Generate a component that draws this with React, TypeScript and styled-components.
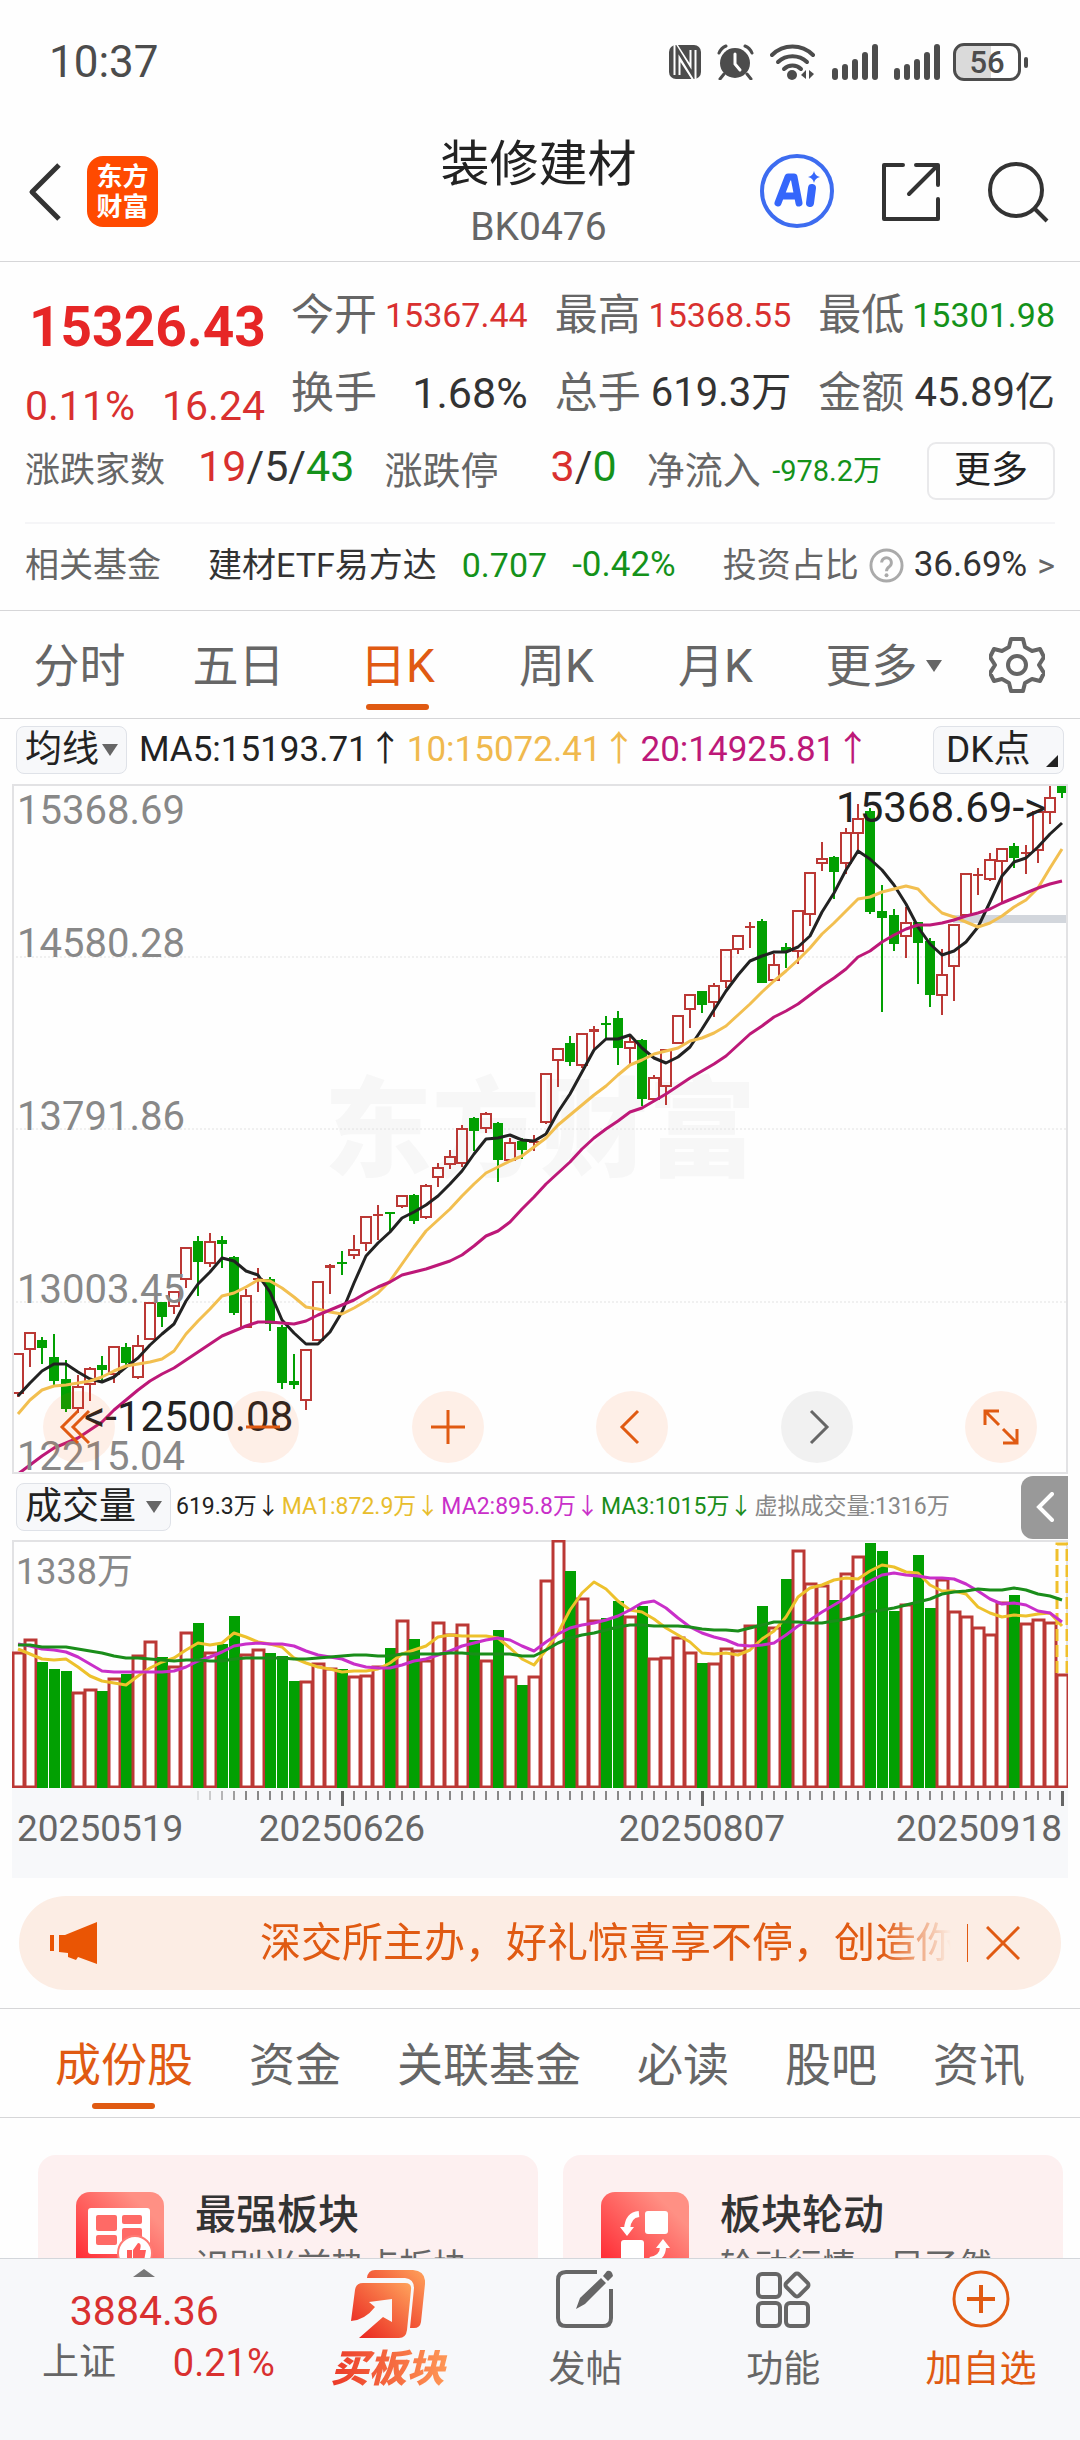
import React from 'react';
import styled, { createGlobalStyle, css } from 'styled-components';

const color = {
  ink: '#222222',
  text: '#333333',
  muted: '#666666',
  faint: '#888888',
  up: '#d9302f',
  down: '#14921a',
  accent: '#e05a12',
  line: '#d6d6d8',
  frame: '#e2e2e4',
  panel: '#f7f8fa',
};

const Global = createGlobalStyle`
  *, *::before, *::after { box-sizing: border-box; }
  body {
    margin: 0;
    background: #fefefe;
    color: ${color.text};
    font-family: Roboto, 'Noto Sans CJK SC', sans-serif;
  }
  button {
    margin: 0;
    padding: 0;
    border: 0;
    background: none;
    color: inherit;
    font: inherit;
    cursor: pointer;
  }
  a { color: inherit; text-decoration: none; }
  svg { display: block; flex: none; }
`;

const Screen = styled.div`
  display: flex;
  flex-direction: column;
  height: 100vh;
  overflow: hidden;
`;

const Scroll = styled.main`
  flex: 1;
  min-height: 0;
  overflow-y: auto;
  scrollbar-width: none;
`;

/* ---------- status bar ---------- */

const StatusBar = styled.div`
  display: flex;
  align-items: center;
  justify-content: space-between;
  height: 124px;
  padding: 0 51px 0 49px;
  color: #4c4c4c;
  font-size: 44px;
  line-height: 60px;
`;

const StatusIcons = styled.div`
  display: flex;
  align-items: center;
  gap: 16px;
`;

/* ---------- header ---------- */

const Header = styled.header`
  display: grid;
  grid-template-columns: 1fr auto 1fr;
  align-items: center;
  height: 138px;
  padding: 0 31px 2px 28px;
  border-bottom: 1px solid ${color.line};
`;

const HeaderSide = styled.div<{ $end?: boolean }>`
  display: flex;
  align-items: center;
  gap: ${(p) => (p.$end ? 46 : 26)}px;
  justify-content: ${(p) => (p.$end ? 'flex-end' : 'flex-start')};
`;

const Logo = styled.div`
  display: grid;
  place-content: center;
  width: 71px;
  height: 71px;
  border-radius: 16px;
  background: #ff4a00;
  color: #fff;
  font-size: 26px;
  font-weight: 700;
  line-height: 30px;
`;

const TitleBlock = styled.div`
  padding-top: 6px;
  text-align: center;
`;

const Title = styled.h1`
  margin: 0;
  color: ${color.ink};
  font-size: 49px;
  font-weight: 400;
  line-height: 64px;
`;

const Code = styled.div`
  color: ${color.muted};
  font-size: 39px;
  line-height: 60px;
`;

/* ---------- quote panel ---------- */

const Quote = styled.section`
  padding: 14px 25px 0;
  border-bottom: 1px solid ${color.line};
  line-height: 50px;
`;

const QuoteTop = styled.div`
  display: grid;
  grid-template-columns: 240px 1fr;
  gap: 26px;
`;

const Price = styled.div`
  padding-top: 18px;
  color: ${color.up};
`;

const PriceNow = styled.div`
  padding-left: 4px;
  color: #e62626;
  font-size: 55px;
  font-weight: 700;
  line-height: 66px;
`;

const PriceChange = styled.div`
  display: flex;
  justify-content: space-between;
  margin-top: 20px;
  font-size: 41px;
  line-height: 52px;
`;

const Metrics = styled.div`
  display: grid;
  grid-template-columns: repeat(3, 1fr);
  column-gap: 27px;
`;

const Metric = styled.div`
  display: flex;
  align-items: center;
  justify-content: space-between;
  height: 78px;
  white-space: nowrap;
`;

const MetricLabel = styled.span<{ $size?: number }>`
  color: ${color.muted};
  font-size: ${(p) => p.$size ?? 43}px;
`;

const Value = styled.span<{ $tone?: string; $size?: number }>`
  color: ${(p) => p.$tone ?? color.text};
  font-size: ${(p) => p.$size ?? 43}px;
`;

const BreadthRow = styled.div`
  display: flex;
  align-items: center;
  gap: 30px;
  height: 78px;
`;

const Breadth = styled(Metric)<{ $grow: number }>`
  flex: ${(p) => p.$grow} 1 0;
`;

const MoreButton = styled.button`
  width: 128px;
  height: 58px;
  margin-left: 15px;
  border: 2px solid #e9e9eb;
  border-radius: 9px;
  color: ${color.ink};
  font-size: 37px;
  line-height: 50px;
`;

const FundRow = styled.a`
  display: flex;
  align-items: center;
  height: 88px;
  margin-top: 12px;
  padding-bottom: 4px;
  border-top: 2px solid #f5f5f7;
  font-size: 34px;
  white-space: nowrap;
`;

const FundMain = styled.span`
  display: flex;
  gap: 25px;
  margin-left: 47px;
`;

const FundShare = styled.span`
  display: flex;
  align-items: center;
  gap: 10px;
  margin-left: auto;
`;

/* ---------- tabs ---------- */

const PeriodTabs = styled.nav`
  display: grid;
  grid-template-columns: repeat(5, 159fr) 177fr 108fr;
  height: 108px;
  border-bottom: 1px solid ${color.line};
`;

const activeBar = css`
  &::after {
    content: '';
    position: absolute;
    bottom: 8px;
    left: 50%;
    width: 63px;
    height: 6px;
    margin-left: -32px;
    border-radius: 3px;
    background: ${color.accent};
  }
`;

const Tab = styled.button<{ $active?: boolean }>`
  position: relative;
  display: flex;
  align-items: center;
  justify-content: center;
  gap: 8px;
  padding-top: 3px;
  color: ${(p) => (p.$active ? color.accent : color.muted)};
  font-size: 46px;
  line-height: 60px;
  ${(p) => p.$active && activeBar}
`;

const GearButton = styled.button`
  display: grid;
  place-items: center;
  padding-right: 18px;
`;

const SectionTabs = styled.nav`
  display: flex;
  justify-content: space-between;
  height: 110px;
  padding: 0 55px;
  border-top: 1px solid ${color.line};
  border-bottom: 1px solid ${color.line};
`;

/* ---------- chart ---------- */

const IndicatorRow = styled.div`
  display: flex;
  align-items: center;
  height: 65px;
  padding: 0 16px 4px;
`;

const PillButton = styled.button<{ $width: number }>`
  position: relative;
  display: flex;
  flex: none;
  align-items: center;
  justify-content: space-between;
  width: ${(p) => p.$width}px;
  height: 48px;
  padding: 0 8px;
  border: 1px solid #dfe2e8;
  border-radius: 8px;
  background: ${color.panel};
  color: ${color.ink};
  font-size: 37px;
  line-height: 46px;
`;

const CornerPill = styled(PillButton)`
  padding: 0 12px;
`;

const Reading = styled.span<{ $tone: string }>`
  color: ${(p) => p.$tone};
`;

const Readings = styled.div`
  display: flex;
  flex: 1;
  gap: 4px;
  margin-left: 12px;
  font-size: 35px;
  line-height: 46px;
  white-space: nowrap;
`;

const VolumeRow = styled.div`
  display: flex;
  align-items: center;
  height: 66px;
  padding: 0 12px 0 16px;
`;

const VolumeReadings = styled.div`
  display: flex;
  flex: 1;
  gap: 2px;
  margin-left: 5px;
  font-size: 23px;
  line-height: 46px;
  white-space: nowrap;
`;

const CollapseButton = styled.button`
  display: grid;
  place-items: center;
  width: 47px;
  height: 63px;
  border-radius: 12px 0 0 12px;
  background: #999;
`;

const ChartBox = styled.div`
  position: relative;
  margin: 0 12px;
`;

const ChartSvg = styled.svg`
  width: 100%;
  height: auto;
`;

const AxisSvg = styled(ChartSvg)`
  background: ${color.panel};
`;

const ChartTools = styled.div`
  position: absolute;
  right: 31px;
  bottom: 11px;
  left: 31px;
  display: flex;
  justify-content: space-between;
`;

const ToolButton = styled.button<{ $disabled?: boolean }>`
  display: grid;
  place-items: center;
  width: 72px;
  height: 72px;
  border-radius: 50%;
  background: ${(p) => (p.$disabled ? 'rgba(0, 0, 0, 0.05)' : 'rgba(255, 90, 0, 0.09)')};
  color: ${(p) => (p.$disabled ? '#666' : color.accent)};
`;

/* ---------- notice ---------- */

const Notice = styled.aside`
  display: flex;
  align-items: center;
  height: 94px;
  margin: 18px 19px;
  padding: 0 41px 0 31px;
  border-radius: 47px;
  background: #fcede4;
  color: ${color.accent};
`;

const NoticeText = styled.a`
  flex: 1;
  min-width: 0;
  margin: 0 16px 0 162px;
  overflow: hidden;
  font-size: 41px;
  line-height: 56px;
  white-space: nowrap;
  mask-image: linear-gradient(to right, #000 90%, transparent 100%);
`;

const NoticeClose = styled.button`
  display: flex;
  align-items: center;
  gap: 18px;
`;

const NoticeRule = styled.span`
  width: 1px;
  height: 38px;
  background: ${color.accent};
`;

/* ---------- cards ---------- */

const Cards = styled.section`
  display: grid;
  grid-template-columns: 1fr 1fr;
  gap: 25px;
  padding: 37px 17px 0 38px;
`;

const Card = styled.a`
  display: flex;
  gap: 31px;
  padding: 37px 38px;
  border-radius: 18px;
  background: #fdf0f0;
`;

const CardTitle = styled.h2`
  margin: -6px 0 0;
  color: ${color.text};
  font-size: 41px;
  font-weight: 500;
  line-height: 58px;
`;

const CardNote = styled.p`
  margin: 0;
  color: ${color.muted};
  font-size: 34px;
  line-height: 44px;
  white-space: nowrap;
`;

/* ---------- bottom bar ---------- */

const BottomBar = styled.nav`
  display: grid;
  grid-template-columns: 289fr repeat(4, 198fr);
  flex: none;
  height: 182px;
  border-top: 1px solid #d3d6db;
  background: ${color.panel};
`;

const IndexButton = styled.button`
  display: flex;
  flex-direction: column;
  align-items: center;
  padding-top: 10px;
  color: ${color.up};
  text-align: left;
`;

const IndexValue = styled.span`
  margin-top: 8px;
  font-size: 41px;
  line-height: 52px;
`;

const IndexLine = styled.span`
  display: flex;
  align-items: center;
  justify-content: space-between;
  width: 100%;
  padding: 0 14px 0 42px;
  font-size: 38px;
  line-height: 52px;
`;

const BarItem = styled.button<{ $accent?: boolean }>`
  display: flex;
  flex-direction: column;
  align-items: center;
  padding-top: 11px;
  color: ${(p) => (p.$accent ? color.accent : color.muted)};
`;

const BarLabel = styled.span`
  margin-top: 16px;
  font-size: 37px;
  line-height: 52px;
`;

const HotLabel = styled.span`
  margin-top: 5px;
  padding: 0 6px;
  background: linear-gradient(90deg, #ea3426, #ff9a57);
  background-clip: text;
  color: transparent;
  font-size: 38px;
  font-style: italic;
  font-weight: 900;
  line-height: 52px;
`;

/* ---------- icons ---------- */

const NfcIcon = () => (
  <svg width="32" height="34" viewBox="0 0 32 34" aria-hidden="true">
    <rect width="32" height="34" rx="7" fill="#4c4c4c" />
    <path d="M8 30V5l16 25V5" fill="none" stroke="#fff" strokeWidth="7" />
    <path d="M8 31V4l16 26V4" fill="none" stroke="#4c4c4c" strokeWidth="3" />
  </svg>
);

const AlarmIcon = () => (
  <svg width="37" height="36" viewBox="0 0 37 36" aria-hidden="true">
    <circle cx="18" cy="19" r="15" fill="#4c4c4c" />
    <path d="M2 9a13 13 0 0 1 7-7M35 9a13 13 0 0 0-7-7M7 30l-4 5M30 30l4 5" fill="none" stroke="#4c4c4c" strokeWidth="3" strokeLinecap="round" />
    <path d="M18 10v10l5 6" fill="none" stroke="#fff" strokeWidth="3" strokeLinecap="round" />
  </svg>
);

const WifiIcon = () => (
  <svg width="46" height="36" viewBox="0 0 46 36" aria-hidden="true">
    <g fill="none" stroke="#4c4c4c" strokeWidth="4" strokeLinecap="round">
      <path d="M2 11a29 29 0 0 1 41 0" />
      <path d="M8 18a21 21 0 0 1 29 0" />
      <path d="M14 25a12 12 0 0 1 17 0" />
    </g>
    <circle cx="22" cy="31" r="5" fill="#4c4c4c" />
    <path d="M36 26v9l-5-4zM39 26v9l5-5z" fill="#4c4c4c" />
  </svg>
);

const SignalIcon = () => (
  <svg width="46" height="36" viewBox="0 0 46 36" aria-hidden="true">
    <path d="M3 27v6M13 23v10M23 18v15M33 11v22M43 3v30" stroke="#4c4c4c" strokeWidth="6" strokeLinecap="round" />
  </svg>
);

const Battery = styled.span`
  position: relative;
  width: 68px;
  height: 38px;
  margin-right: 8px;
  margin-left: -3px;
  border: 3px solid #4c4c4c;
  border-radius: 11px;
  background: linear-gradient(90deg, #dadada 56%, #fff 56%);
  font-size: 31px;
  font-weight: 500;
  line-height: 33px;
  text-align: center;

  &::after {
    content: '';
    position: absolute;
    top: 11px;
    right: -10px;
    width: 4px;
    height: 11px;
    border-radius: 2px;
    background: #4c4c4c;
  }
`;

const BackIcon = () => (
  <svg width="33" height="58" viewBox="0 0 33 58" aria-hidden="true">
    <path d="M31 2L4 29l27 27" fill="none" stroke="#333" strokeWidth="5" strokeLinejoin="round" />
  </svg>
);

const AiIcon = () => (
  <svg width="75" height="75" viewBox="0 0 75 75" aria-hidden="true">
    <circle cx="37" cy="37" r="35" fill="none" stroke="#3d6cf0" strokeWidth="4" />
    <path d="M18 49l10-26h6l5 26M23 42h14" fill="none" stroke="#3566fb" strokeWidth="7" strokeLinejoin="round" strokeLinecap="round" />
    <path d="M52 34l-2 15" fill="none" stroke="#3566fb" strokeWidth="8" strokeLinecap="round" />
    <path d="M54 17q1 5 6 6q-5 1-6 6q-1-5-6-6q5-1 6-6z" fill="#3566fb" />
  </svg>
);

const ShareIcon = () => (
  <svg width="60" height="60" viewBox="0 0 60 60" aria-hidden="true">
    <path d="M22 3H3v54h54V37M35 3h22v20M56 4L28 32" fill="none" stroke="#333" strokeWidth="4" strokeLinejoin="round" strokeLinecap="round" />
  </svg>
);

const SearchIcon = () => (
  <svg width="62" height="62" viewBox="0 0 62 62" aria-hidden="true">
    <circle cx="29" cy="29" r="26" fill="none" stroke="#333" strokeWidth="4" />
    <path d="M48 48l12 12" stroke="#333" strokeWidth="4" />
  </svg>
);

const HelpIcon = () => (
  <svg width="35" height="35" viewBox="0 0 36 36" aria-hidden="true">
    <circle cx="18" cy="18" r="16" fill="none" stroke="#aaa" strokeWidth="3" />
    <path d="M13 15a5 5 0 1 1 8 4q-3 2-3 5" fill="none" stroke="#aaa" strokeWidth="3" />
    <circle cx="18" cy="28" r="2" fill="#aaa" />
  </svg>
);

const GearIcon = () => (
  <svg width="56" height="56" viewBox="0 0 56 56" aria-hidden="true">
    <path
      d="M22 2h12l2 8 7 4 8-2 4 8-5 8 5 8-4 8-8-2-7 4-2 8H22l-2-8-7-4-8 2-4-8 5-8-5-8 4-8 8 2 7-4z"
      fill="none"
      stroke="#666"
      strokeWidth="4"
      strokeLinejoin="round"
    />
    <circle cx="28" cy="28" r="9" fill="none" stroke="#666" strokeWidth="4" />
  </svg>
);

const CaretIcon = () => (
  <svg width="16" height="14" viewBox="0 0 16 14" aria-hidden="true">
    <path d="M0 1h16L8 13z" fill="#666" />
  </svg>
);

const CornerMark = styled.span`
  position: absolute;
  right: 5px;
  bottom: 6px;
  border-bottom: 12px solid ${color.ink};
  border-left: 12px solid transparent;
`;

const ToolIcon = ({ d, width = 3 }: { d: string; width?: number }) => (
  <svg width="40" height="40" viewBox="0 0 40 40" fill="none" stroke="currentColor" strokeWidth={width} aria-hidden="true">
    <path d={d} />
  </svg>
);

const HornIcon = () => (
  <svg width="48" height="42" viewBox="0 0 48 42" fill="#ea5504" aria-hidden="true">
    <path d="M0 13h4v16H0zM9 13h6L47 0v42l-19-7-2 3-8-3 0-4-9-1z" />
  </svg>
);

const CloseIcon = () => (
  <svg width="34" height="34" viewBox="0 0 34 34" aria-hidden="true">
    <path d="M1 1l32 32M33 1L1 33" stroke={color.accent} strokeWidth="3" />
  </svg>
);

const CardGradient = ({ id }: { id: string }) => (
  <linearGradient id={id} x1="0" y1="1" x2="1" y2="0">
    <stop offset="15%" stopColor="#ff3038" />
    <stop offset="80%" stopColor="#ff9084" />
  </linearGradient>
);

const BoardIcon = () => (
  <svg width="88" height="88" viewBox="0 0 88 88" aria-hidden="true">
    <defs><CardGradient id="board" /></defs>
    <rect width="88" height="88" rx="14" fill="url(#board)" />
    <rect x="12" y="16" width="62" height="46" rx="3" fill="#fff" />
    <g fill="#ff6a66">
      <rect x="20" y="23" width="21" height="16" rx="2" />
      <rect x="46" y="23" width="20" height="9" rx="2" />
      <rect x="20" y="43" width="21" height="10" rx="2" />
      <rect x="46" y="36" width="20" height="18" rx="2" />
    </g>
    <circle cx="59" cy="61" r="17" fill="#fff" stroke="#ff7a73" strokeWidth="2" />
    <path d="M51 58h5v11h-5zM57 58l5-7q4 0 2 7h6l-2 11H57z" fill="#ff5c5a" />
    <rect x="24" y="67" width="18" height="6" rx="3" fill="#fff" />
  </svg>
);

const RotateIcon = () => (
  <svg width="88" height="88" viewBox="0 0 88 88" aria-hidden="true">
    <defs><CardGradient id="rotate" /></defs>
    <rect width="88" height="88" rx="14" fill="url(#rotate)" />
    <rect x="44" y="19" width="23" height="23" rx="3" fill="#fff" />
    <rect x="20" y="48" width="23" height="23" rx="3" fill="#fff" />
    <path d="M38 22q-11 1-12 15M49 68q13-2 13-13" fill="none" stroke="#fff" strokeWidth="6" />
    <path d="M19 35h14l-7 9zM55 56h14l-7-9z" fill="#fff" />
  </svg>
);

const HotIcon = () => (
  <svg width="74" height="68" viewBox="0 0 74 68" aria-hidden="true">
    <defs>
      <linearGradient id="hot" x1="0" y1="1" x2="1" y2="0">
        <stop offset="10%" stopColor="#ea2a22" />
        <stop offset="100%" stopColor="#ffa35c" />
      </linearGradient>
    </defs>
    <path d="M16 8q1-8 8-8h38q13 1 12 14l-4 38q-1 6-7 6h-4l4-40q0-9-9-10z" fill="url(#hot)" />
    <path d="M0 51L4 20q1-7 8-7h42q7 0 6 7l-4 40q-1 8-8 8H8l24-21 9 5V29l-23 3 6 5Q14 50 0 51z" fill="url(#hot)" />
  </svg>
);

const PostIcon = () => (
  <svg width="58" height="58" viewBox="0 0 58 58" aria-hidden="true">
    <path d="M41 2H10q-8 0-8 8v38q0 8 8 8h37q8 0 8-8V19" fill="none" stroke="#666" strokeWidth="4" />
    <path d="M20 39l4-11 21-20 5 5-21 21zM47 6l4-5q5-1 6 5l-5 5z" fill="#666" />
  </svg>
);

const GridIcon = () => (
  <svg width="58" height="58" viewBox="0 0 58 58" fill="none" stroke="#666" strokeWidth="4" aria-hidden="true">
    <rect x="4" y="4" width="22" height="23" rx="4" />
    <rect x="4" y="33" width="22" height="23" rx="4" />
    <rect x="32" y="33" width="22" height="23" rx="4" />
    <rect x="34" y="6" width="18" height="18" rx="3" transform="rotate(45 43 15)" />
  </svg>
);

const AddIcon = () => (
  <svg width="58" height="58" viewBox="0 0 58 58" fill="none" stroke={color.accent} strokeWidth="3" aria-hidden="true">
    <circle cx="29" cy="29" r="27" />
    <path d="M29 15v28M15 29h28" strokeWidth="4" />
  </svg>
);

/* ---------- chart data ---------- */

const STEP = 12;
const PRICE_H = 690;
const VOLUME_H = 248;

// One candle per trading day: direction, body top, body bottom, wick top, wick bottom.
type Candle = [0 | 1, number, number, number, number];
const candles: Candle[] = [
  [1, 569, 609, 569, 613], [1, 548, 565, 548, 583], [0, 556, 564, 553, 580], [0, 573, 597, 550, 601],
  [0, 595, 625, 576, 628], [1, 602, 624, 591, 629], [1, 584, 600, 583, 617], [0, 581, 586, 572, 598],
  [1, 562, 590, 562, 599], [0, 563, 579, 559, 581], [1, 561, 593, 551, 595], [1, 518, 555, 518, 555],
  [0, 518, 533, 518, 543], [1, 507, 522, 507, 530], [1, 463, 495, 463, 504], [0, 457, 478, 452, 512],
  [1, 457, 479, 449, 483], [0, 456, 460, 452, 484], [0, 473, 529, 472, 531], [1, 511, 543, 505, 543],
  [1, 494, 496, 484, 508], [0, 495, 540, 493, 547], [0, 543, 599, 541, 605], [0, 597, 601, 570, 605],
  [1, 565, 616, 565, 626], [1, 497, 556, 497, 556], [1, 481, 484, 480, 510], [0, 478, 480, 467, 491],
  [1, 465, 471, 451, 475], [1, 432, 459, 432, 467], [1, 430, 432, 421, 456], [0, 428, 430, 428, 448],
  [1, 411, 422, 411, 424], [0, 411, 437, 410, 440], [1, 401, 433, 400, 435], [1, 383, 393, 379, 403],
  [1, 372, 380, 366, 385], [1, 344, 379, 341, 383], [0, 334, 347, 333, 367], [1, 329, 344, 328, 349],
  [0, 339, 376, 338, 398], [1, 358, 376, 354, 376], [0, 357, 366, 354, 375], [1, 357, 359, 351, 367],
  [1, 289, 338, 289, 340], [1, 264, 276, 264, 303], [0, 259, 278, 252, 282], [1, 249, 281, 249, 284],
  [1, 245, 248, 242, 266], [0, 239, 241, 232, 255], [0, 234, 264, 227, 281], [1, 257, 264, 253, 281],
  [0, 256, 315, 255, 322], [1, 293, 315, 291, 317], [1, 265, 302, 265, 321], [1, 231, 259, 231, 259],
  [1, 210, 225, 210, 244], [0, 207, 221, 207, 229], [1, 201, 218, 199, 233], [1, 165, 197, 165, 204],
  [1, 151, 165, 151, 170], [1, 142, 144, 138, 164], [0, 137, 199, 135, 199], [1, 180, 196, 170, 196],
  [0, 163, 168, 159, 184], [1, 126, 167, 126, 180], [1, 88, 130, 88, 142], [1, 74, 79, 58, 87],
  [0, 73, 88, 72, 115], [1, 48, 79, 44, 90], [1, 34, 49, 20, 68], [0, 27, 128, 24, 130],
  [0, 127, 134, 101, 228], [0, 131, 160, 125, 167], [1, 138, 152, 123, 174], [0, 138, 159, 138, 200],
  [0, 157, 211, 154, 223], [1, 190, 211, 165, 231], [1, 140, 182, 140, 217], [1, 89, 131, 89, 131],
  [1, 90, 92, 84, 111], [1, 75, 95, 69, 97], [1, 64, 77, 64, 118], [0, 62, 74, 59, 84],
  [1, 68, 70, 61, 90], [1, 27, 66, 27, 79], [1, 13, 28, 0, 40], [0, 0, 9, 0, 14],
];

const ma5 = [
  612, 599, 587, 580, 580, 588, 595, 598, 593, 583, 574, 561, 550, 540, 517, 500, 488, 474, 477, 487, 491, 508,
  536, 549, 560, 560, 548, 528, 499, 472, 459, 448, 434, 428, 421, 412, 400, 387, 370, 355, 354, 351, 356, 357,
  350, 328, 310, 288, 266, 255, 255, 251, 264, 274, 279, 273, 263, 245, 226, 207, 191, 177, 172, 168, 168, 163,
  152, 128, 109, 86, 67, 75, 86, 101, 120, 143, 160, 171, 167, 158, 143, 118, 92, 78, 74, 63, 50, 39,
];
const ma10 = [
  630, 616, 606, 602, 601, 599, 597, 593, 587, 582, 580, 578, 575, 567, 550, 537, 525, 512, 509, 503, 496, 497,
  504, 513, 523, 525, 528, 530, 524, 517, 509, 497, 480, 463, 447, 436, 425, 412, 400, 389, 383, 377, 372, 363,
  354, 341, 331, 321, 311, 302, 291, 281, 276, 270, 267, 264, 257, 254, 249, 242, 231, 220, 208, 197, 187, 176,
  164, 150, 139, 127, 115, 113, 108, 105, 102, 105, 118, 129, 133, 138, 143, 139, 132, 123, 116, 104, 84, 65,
];
const ma20 = [
  690, 681, 672, 664, 659, 654, 646, 638, 626, 616, 606, 597, 590, 584, 576, 568, 560, 552, 547, 542, 538, 538,
  539, 540, 537, 531, 526, 521, 516, 509, 503, 498, 491, 488, 485, 481, 477, 471, 462, 452, 447, 438, 425, 413,
  400, 389, 378, 365, 354, 345, 337, 328, 324, 317, 310, 302, 294, 287, 280, 272, 261, 250, 242, 233, 227, 220,
  211, 202, 194, 185, 173, 167, 158, 151, 145, 141, 141, 139, 136, 132, 129, 125, 119, 114, 109, 104, 100, 97,
];

const volumeTops = [
  112, 99, 122, 129, 131, 152, 149, 151, 138, 134, 115, 101, 117, 126, 92, 83, 112, 104, 76, 114, 109, 113, 116,
  141, 141, 123, 128, 129, 136, 135, 126, 108, 80, 99, 120, 82, 94, 84, 100, 120, 90, 136, 145, 136, 40, 0, 31,
  58, 80, 78, 61, 76, 66, 118, 117, 97, 112, 123, 123, 108, 110, 85, 66, 87, 39, 10, 43, 45, 60, 33, 16, 3, 11,
  71, 64, 15, 68, 39, 71, 76, 87, 94, 62, 55, 83, 79, 82, 134,
];
const volMa1 = [
  109, 114, 119, 120, 119, 127, 136, 141, 143, 145, 136, 128, 122, 118, 110, 103, 105, 103, 93, 97, 102, 104, 107,
  118, 123, 127, 129, 132, 131, 131, 129, 123, 114, 110, 106, 97, 95, 96, 96, 96, 98, 108, 119, 125, 110, 93, 70,
  53, 42, 49, 61, 70, 72, 79, 88, 95, 102, 113, 114, 113, 115, 110, 99, 91, 77, 57, 48, 45, 40, 38, 39, 31, 25,
  27, 32, 33, 45, 51, 51, 54, 67, 73, 77, 75, 76, 74, 73, 86,
];
const volMa2 = [
  104, 106, 109, 110, 112, 117, 124, 131, 132, 132, 132, 132, 132, 131, 127, 121, 117, 112, 106, 104, 103, 104,
  104, 106, 111, 115, 117, 119, 124, 127, 128, 128, 125, 121, 119, 115, 111, 106, 103, 100, 98, 100, 106, 111,
  102, 94, 88, 85, 83, 80, 76, 70, 63, 61, 68, 78, 87, 93, 97, 100, 105, 106, 105, 103, 95, 86, 80, 72, 65, 58,
  48, 41, 35, 33, 35, 36, 38, 38, 39, 44, 51, 59, 64, 63, 65, 71, 73, 82,
];
const volMa3 = [
  105, 105, 107, 107, 107, 109, 111, 113, 116, 118, 118, 119, 120, 121, 120, 120, 121, 121, 119, 118, 118, 118,
  118, 119, 119, 118, 117, 116, 115, 115, 116, 116, 114, 114, 114, 114, 113, 113, 114, 114, 114, 114, 116, 116,
  110, 103, 98, 95, 93, 90, 87, 85, 85, 86, 86, 86, 87, 89, 90, 90, 91, 88, 85, 82, 82, 82, 83, 83, 81, 79, 76,
  72, 70, 68, 65, 62, 59, 54, 52, 51, 49, 50, 50, 48, 50, 54, 56, 60,
];

const centre = (i: number) => i * STEP + STEP / 2;
const points = (ys: number[]) => ys.map((y, i) => `${centre(i)},${y}`).join(' ');

const UP = '#bb3835';
const DOWN = '#02a002';

const Line = ({ ys, stroke }: { ys: number[]; stroke: string }) => (
  <polyline points={points(ys)} fill="none" stroke={stroke} strokeWidth="3" strokeLinejoin="round" />
);

const chartFont = { fontFamily: "Roboto, 'Noto Sans CJK SC', sans-serif" };

const priceLabels: [string, number][] = [
  ['15368.69', 40], ['14580.28', 173], ['13791.86', 346], ['13003.45', 519], ['12215.04', 686],
];

const PriceChart = () => (
  <ChartSvg viewBox={`0 0 1056 ${PRICE_H}`} role="img" aria-label="日K线">
    <text x="528" y="384" textAnchor="middle" fontSize="108" fontWeight="900" fill="#f7f7f7" {...chartFont}>东方财富</text>
    {[173, 345, 518].map((y) => (
      <path key={y} d={`M0 ${y}H1056`} stroke="#e2e2e2" strokeDasharray="2 2" />
    ))}
    <rect x="941" y="131" width="115" height="8" fill="#d2d6dc" />
    {candles.map(([up, top, bottom, high, low], i) => {
      const x = centre(i);
      const flat = bottom - top < 4;
      if (!up || flat) {
        return (
          <g key={i} fill={up ? UP : DOWN}>
            <rect x={x - 1} y={high} width="2" height={low - high} />
            <rect x={x - 5} y={top} width="10" height={bottom - top} />
          </g>
        );
      }
      return (
        <g key={i} fill="none" stroke={UP} strokeWidth="2">
          <path d={`M${x} ${high}V${top}M${x} ${bottom}V${low}`} />
          <rect x={x - 5} y={top + 1} width="10" height={bottom - top - 1} />
        </g>
      );
    })}
    <Line ys={ma5} stroke="#222222" />
    <Line ys={ma10} stroke="#f2bf50" />
    <Line ys={ma20} stroke="#bd1878" />
    <rect x="1" y="1" width="1054" height={PRICE_H - 2} fill="none" stroke={color.frame} strokeWidth="2" />
    <g fontSize="40" {...chartFont}>
      {priceLabels.map(([label, y]) => (
        <text key={label} x="5" y={y} fill={color.faint}>{label}</text>
      ))}
    </g>
    <g fontSize="42" fill={color.ink} {...chartFont}>
      <text x="1034" y="38" textAnchor="end">15368.69-&gt;</text>
      <text x="72" y="647">&lt;-12500.08</text>
    </g>
  </ChartSvg>
);

const VolumeChart = () => (
  <ChartSvg viewBox={`0 0 1056 ${VOLUME_H}`} role="img" aria-label="成交量">
    <path d={`M1 ${VOLUME_H}V1H1055V${VOLUME_H}`} fill="none" stroke={color.frame} strokeWidth="2" />
    {volumeTops.map((top, i) =>
      candles[i][0] || i === 87 ? (
        <rect key={i} x={centre(i) - 5} y={top + 1} width="11" height={VOLUME_H - top - 2} fill="#fff" stroke={UP} strokeWidth="3" />
      ) : (
        <rect key={i} x={centre(i) - 5} y={top} width="11" height={VOLUME_H - top} fill={DOWN} />
      ),
    )}
    <path d="M1045 133V4H1055V133" fill="none" stroke="#f0c02c" strokeWidth="3" strokeDasharray="12 4" />
    <Line ys={volMa1} stroke="#edc12c" />
    <Line ys={volMa2} stroke="#c92fc9" />
    <Line ys={volMa3} stroke="#1a8d1a" />
    <text x="4" y="44" fontSize="36" fill={color.faint} {...chartFont}>1338万</text>
  </ChartSvg>
);

const majorTicks = [27, 57, 87];

const DateAxis = () => (
  <AxisSvg viewBox="0 0 1056 90" role="img" aria-label="日期">
    {candles.map((_, i) => {
      if (i < 15) return null;
      const major = majorTicks.includes(i);
      return (
        <rect
          key={i}
          x={centre(i) - 1}
          y="3"
          width={major ? 3 : 2}
          height={major ? 15 : 9}
          fill={major ? '#666' : '#888'}
          opacity={Math.min(1, (i - 14) / 5)}
        />
      );
    })}
    <g fontSize="37" fill={color.muted} {...chartFont}>
      <text x="5" y="53">20250519</text>
      <text x="330" y="53" textAnchor="middle">20250626</text>
      <text x="690" y="53" textAnchor="middle">20250807</text>
      <text x="1050" y="53" textAnchor="end">20250918</text>
    </g>
  </AxisSvg>
);

/* ---------- page ---------- */

const metrics = [
  { label: '今开', value: '15367.44', tone: color.up, size: 34 },
  { label: '最高', value: '15368.55', tone: color.up, size: 34 },
  { label: '最低', value: '15301.98', tone: color.down, size: 34 },
  { label: '换手', value: '1.68%', size: 43 },
  { label: '总手', value: '619.3万', size: 40 },
  { label: '金额', value: '45.89亿', size: 40 },
];

const periods = ['分时', '五日', '日K', '周K', '月K'];
const sections = ['成份股', '资金', '关联基金', '必读', '股吧', '资讯'];

export default function App() {
  return (
    <Screen>
      <Global />
      <Scroll>
        <StatusBar>
          <span>10:37</span>
          <StatusIcons>
            <NfcIcon />
            <AlarmIcon />
            <WifiIcon />
            <SignalIcon />
            <SignalIcon />
            <Battery>56</Battery>
          </StatusIcons>
        </StatusBar>

        <Header>
          <HeaderSide>
            <button type="button" aria-label="返回"><BackIcon /></button>
            <Logo><span>东方</span><span>财富</span></Logo>
          </HeaderSide>
          <TitleBlock>
            <Title>装修建材</Title>
            <Code>BK0476</Code>
          </TitleBlock>
          <HeaderSide $end>
            <button type="button" aria-label="AI"><AiIcon /></button>
            <button type="button" aria-label="分享"><ShareIcon /></button>
            <button type="button" aria-label="搜索"><SearchIcon /></button>
          </HeaderSide>
        </Header>

        <Quote>
          <QuoteTop>
            <Price>
              <PriceNow>15326.43</PriceNow>
              <PriceChange><span>0.11%</span><span>16.24</span></PriceChange>
            </Price>
            <Metrics>
              {metrics.map((m) => (
                <Metric key={m.label}>
                  <MetricLabel>{m.label}</MetricLabel>
                  <Value $tone={m.tone} $size={m.size}>{m.value}</Value>
                </Metric>
              ))}
            </Metrics>
          </QuoteTop>
          <BreadthRow>
            <Breadth $grow={329}>
              <MetricLabel $size={35}>涨跌家数</MetricLabel>
              <span>
                <Value $tone={color.up}>19</Value><Value>/5/</Value><Value $tone={color.down}>43</Value>
              </span>
            </Breadth>
            <Breadth $grow={232}>
              <MetricLabel $size={38}>涨跌停</MetricLabel>
              <span>
                <Value $tone={color.up}>3</Value><Value>/</Value><Value $tone={color.down}>0</Value>
              </span>
            </Breadth>
            <Breadth $grow={235}>
              <MetricLabel $size={38}>净流入</MetricLabel>
              <Value $tone={color.down} $size={29}>-978.2万</Value>
            </Breadth>
            <MoreButton type="button">更多</MoreButton>
          </BreadthRow>
          <FundRow href="#funds">
            <MetricLabel $size={34}>相关基金</MetricLabel>
            <FundMain>
              <Value $size={34}>建材ETF易方达</Value>
              <Value $tone={color.down} $size={34}>0.707</Value>
              <Value $tone={color.down} $size={35}>-0.42%</Value>
            </FundMain>
            <FundShare>
              <MetricLabel $size={34}>投资占比</MetricLabel>
              <HelpIcon />
              <Value $size={35}>36.69%</Value>
              <MetricLabel $size={34}>&gt;</MetricLabel>
            </FundShare>
          </FundRow>
        </Quote>

        <PeriodTabs>
          {periods.map((p) => (
            <Tab key={p} type="button" $active={p === '日K'}>{p}</Tab>
          ))}
          <Tab type="button">更多<CaretIcon /></Tab>
          <GearButton type="button" aria-label="设置"><GearIcon /></GearButton>
        </PeriodTabs>

        <IndicatorRow>
          <PillButton type="button" $width={111}>均线<CaretIcon /></PillButton>
          <Readings>
            <Reading $tone={color.ink}>MA5:15193.71↑</Reading>
            <Reading $tone="#f0b94d">10:15072.41↑</Reading>
            <Reading $tone="#bd1878">20:14925.81↑</Reading>
          </Readings>
          <CornerPill type="button" $width={131}>DK点<CornerMark /></CornerPill>
        </IndicatorRow>

        <ChartBox>
          <PriceChart />
          <ChartTools>
            <ToolButton type="button" aria-label="最早"><ToolIcon d="M19 4L3 20l16 16M30 4L14 20l16 16" /></ToolButton>
            <ToolButton type="button" aria-label="缩小"><ToolIcon d="M3 20h34" /></ToolButton>
            <ToolButton type="button" aria-label="放大"><ToolIcon d="M3 20h34M20 3v34" /></ToolButton>
            <ToolButton type="button" aria-label="向前"><ToolIcon d="M26 4L10 20l16 16" /></ToolButton>
            <ToolButton type="button" aria-label="向后" $disabled><ToolIcon d="M14 4l16 16-16 16" /></ToolButton>
            <ToolButton type="button" aria-label="全屏">
              <ToolIcon width={3} d="M4 18V4h14M5 5l13 13M36 22v14H22M35 35L22 22" />
            </ToolButton>
          </ChartTools>
        </ChartBox>

        <VolumeRow>
          <PillButton type="button" $width={155}>成交量<CaretIcon /></PillButton>
          <VolumeReadings>
            <Reading $tone={color.ink}>619.3万↓</Reading>
            <Reading $tone="#e8bd2c">MA1:872.9万↓</Reading>
            <Reading $tone="#c92fc9">MA2:895.8万↓</Reading>
            <Reading $tone="#1a8d1a">MA3:1015万↓</Reading>
            <Reading $tone={color.faint}>虚拟成交量:1316万</Reading>
          </VolumeReadings>
          <CollapseButton type="button" aria-label="展开">
            <svg width="18" height="30" viewBox="0 0 18 30" aria-hidden="true">
              <path d="M16 2L3 15l13 13" fill="none" stroke="#fff" strokeWidth="4" strokeLinecap="round" />
            </svg>
          </CollapseButton>
        </VolumeRow>

        <ChartBox>
          <VolumeChart />
          <DateAxis />
        </ChartBox>

        <Notice>
          <HornIcon />
          <NoticeText href="#notice">深交所主办，好礼惊喜享不停，创造你</NoticeText>
          <NoticeClose type="button" aria-label="关闭">
            <NoticeRule />
            <CloseIcon />
          </NoticeClose>
        </Notice>

        <SectionTabs>
          {sections.map((s, i) => (
            <Tab key={s} type="button" $active={i === 0}>{s}</Tab>
          ))}
        </SectionTabs>

        <Cards>
          <Card href="#strongest">
            <BoardIcon />
            <div>
              <CardTitle>最强板块</CardTitle>
              <CardNote>识别当前热点板块</CardNote>
            </div>
          </Card>
          <Card href="#rotation">
            <RotateIcon />
            <div>
              <CardTitle>板块轮动</CardTitle>
              <CardNote>轮动行情一目了然</CardNote>
            </div>
          </Card>
        </Cards>
      </Scroll>

      <BottomBar>
        <IndexButton type="button">
          <svg width="22" height="8" viewBox="0 0 22 8" aria-hidden="true"><path d="M11 0l11 8H0z" fill="#777" /></svg>
          <IndexValue>3884.36</IndexValue>
          <IndexLine><MetricLabel $size={37}>上证</MetricLabel><span>0.21%</span></IndexLine>
        </IndexButton>
        <BarItem type="button"><HotIcon /><HotLabel>买板块</HotLabel></BarItem>
        <BarItem type="button"><PostIcon /><BarLabel>发帖</BarLabel></BarItem>
        <BarItem type="button"><GridIcon /><BarLabel>功能</BarLabel></BarItem>
        <BarItem type="button" $accent><AddIcon /><BarLabel>加自选</BarLabel></BarItem>
      </BottomBar>
    </Screen>
  );
}
